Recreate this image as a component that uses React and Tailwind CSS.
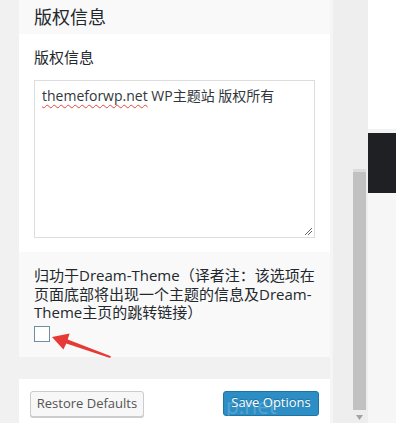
import React from "react";

const font = { fontFamily: '"Open Sans", "Noto Sans CJK SC", sans-serif' };

const App = () => {
  return (
    <div
      className="relative flex w-[396px] h-[423px] overflow-hidden bg-[#f1f1f1] text-[#23282d]"
      style={font}
    >
      <div className="w-[19px] shrink-0" />

      {/* settings column */}
      <div className="w-[311px] shrink-0 flex flex-col">
        <div className="bg-white">
          <div className="h-[34px] bg-[#f9f9f9] px-[15px] flex items-center text-[18px]">
            版权信息
          </div>
          <div className="px-[15px] pt-[13px] pb-[14px]">
            <div className="text-[15px] leading-[20px]">版权信息</div>
            <div className="relative mt-[13px] h-[158px] w-[281px] border border-[#dddddd] px-[7px] pt-[5px] text-[14px] leading-[20px] text-[#32373c]">
              <span className="underline decoration-wavy decoration-[#e0463c] decoration-1 underline-offset-[3px]">
                themeforwp.net
              </span>{" "}
              WP主题站 版权所有
              <svg
                className="absolute right-[1px] bottom-[1px]"
                width="10"
                height="10"
                viewBox="0 0 10 10"
              >
                <path d="M9 2 L2 9 M9 5 L5 9" stroke="#666" strokeWidth="1" />
              </svg>
            </div>
          </div>
          <div className="bg-[#f9f9f9] px-[15px] pt-[14px] pb-[15px]">
            <div className="text-[15px] leading-[18.5px] whitespace-nowrap">
              <div>归功于Dream-Theme（译者注：该选项在</div>
              <div>页面底部将出现一个主题的信息及Dream-</div>
              <div>Theme主页的跳转链接）</div>
            </div>
            <div className="mt-[4px] w-[16px] h-[16px] border border-[#6d8ea3] bg-white" />
          </div>
        </div>

        <div className="h-[22px] shrink-0" />

        <div className="flex-1 bg-white flex justify-between items-start pt-[12px] px-[11px]">
          <button
            type="button"
            className="h-[26px] w-[114px] border border-[#cccccc] bg-[#f7f7f7] rounded-[3px] text-[13px] text-[#555555] shadow-[0_1px_0_#cccccc]"
          >
            Restore Defaults
          </button>
          <button
            type="button"
            className="relative h-[25px] w-[96px] border border-[#1f74a3] bg-[#2c8ec4] rounded-[3px] text-[13px] text-white [text-shadow:0_-1px_1px_#1c6a96]"
          >
            Save Options
            <span className="absolute left-[2px] top-[-1px] text-[21px] text-white/20 [text-shadow:none]">
              p.net
            </span>
          </button>
        </div>
      </div>

      {/* scrollbar gutter */}
      <div className="w-[38px] shrink-0 flex flex-col bg-[#eeeeee] border-l-[3px] border-[#f5f5f5] pt-[169px] pl-[20px]">
        <div className="w-[13px] h-[3px] bg-[#dcdcdc]" />
        <div className="w-[13px] h-[238px] bg-[#c1c1c1]" />
        <svg className="mt-[5px] ml-[3px]" width="7" height="5" viewBox="0 0 7 5">
          <path d="M0 0 H7 L3.5 5 Z" fill="#a3a3a3" />
        </svg>
      </div>

      {/* right edge */}
      <div className="w-[28px] shrink-0 flex flex-col">
        <div className="h-[133px] bg-white border-b-[4px] border-[#f3f3f3]" />
        <div className="h-[60px] bg-[#1e2023]" />
        <div className="flex-1 bg-[#f6f6f6]" />
      </div>

      {/* annotation arrow */}
      <svg
        className="absolute left-0 top-0 pointer-events-none"
        width="396"
        height="423"
        viewBox="0 0 396 423"
      >
        <polygon
          points="52,337 69.6,333.4 67.7,339.5 111,356.3 110,358 66.3,343.5 63.4,349.6"
          fill="#e53a35"
        />
      </svg>
    </div>
  );
};

export default App;
